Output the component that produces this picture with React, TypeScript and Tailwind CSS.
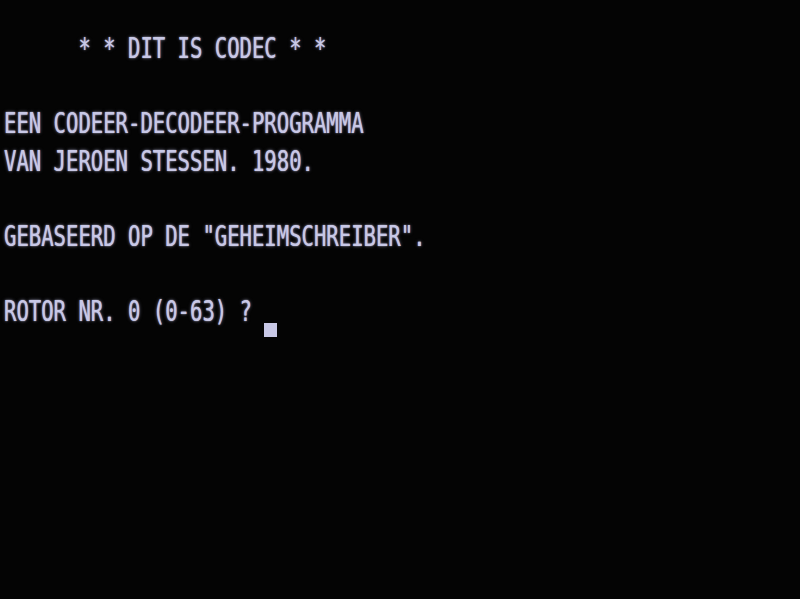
const lines: (string | null)[] = [
  "      * * DIT IS CODEC * *",
  null,
  "EEN CODEER-DECODEER-PROGRAMMA",
  "VAN JEROEN STESSEN. 1980.",
  null,
  'GEBASEERD OP DE "GEHEIMSCHREIBER".',
  null,
];

const Row = ({ text, cursor }: { text: string; cursor?: boolean }) => (
  <div className="flex h-[37.6px] items-start">
    <span className="inline-block whitespace-pre origin-[50%_25.8px] scale-y-[1.4]">
      {text}
    </span>
    {cursor && <div className="mt-[27px] h-[14px] w-[13px] bg-[#c8c8e6]" />}
  </div>
);

const App = () => {
  return (
    <div className="h-[599px] w-[800px] overflow-hidden bg-[#040404]">
      <div className="pl-[4px] pt-[33px] font-['DejaVu_Sans_Mono',monospace] text-[20.6px] leading-[37.6px] text-[#c8c8e6] [text-shadow:0_0_1px_#c8c8e6,0_0_3px_rgba(200,200,240,0.5)]">
        {lines.map((l, i) =>
          l === null ? <div key={i} className="h-[37.6px]" /> : <Row key={i} text={l} />
        )}
        <Row text="ROTOR NR. 0 (0-63) ? " cursor />
      </div>
    </div>
  );
};

export default App;
